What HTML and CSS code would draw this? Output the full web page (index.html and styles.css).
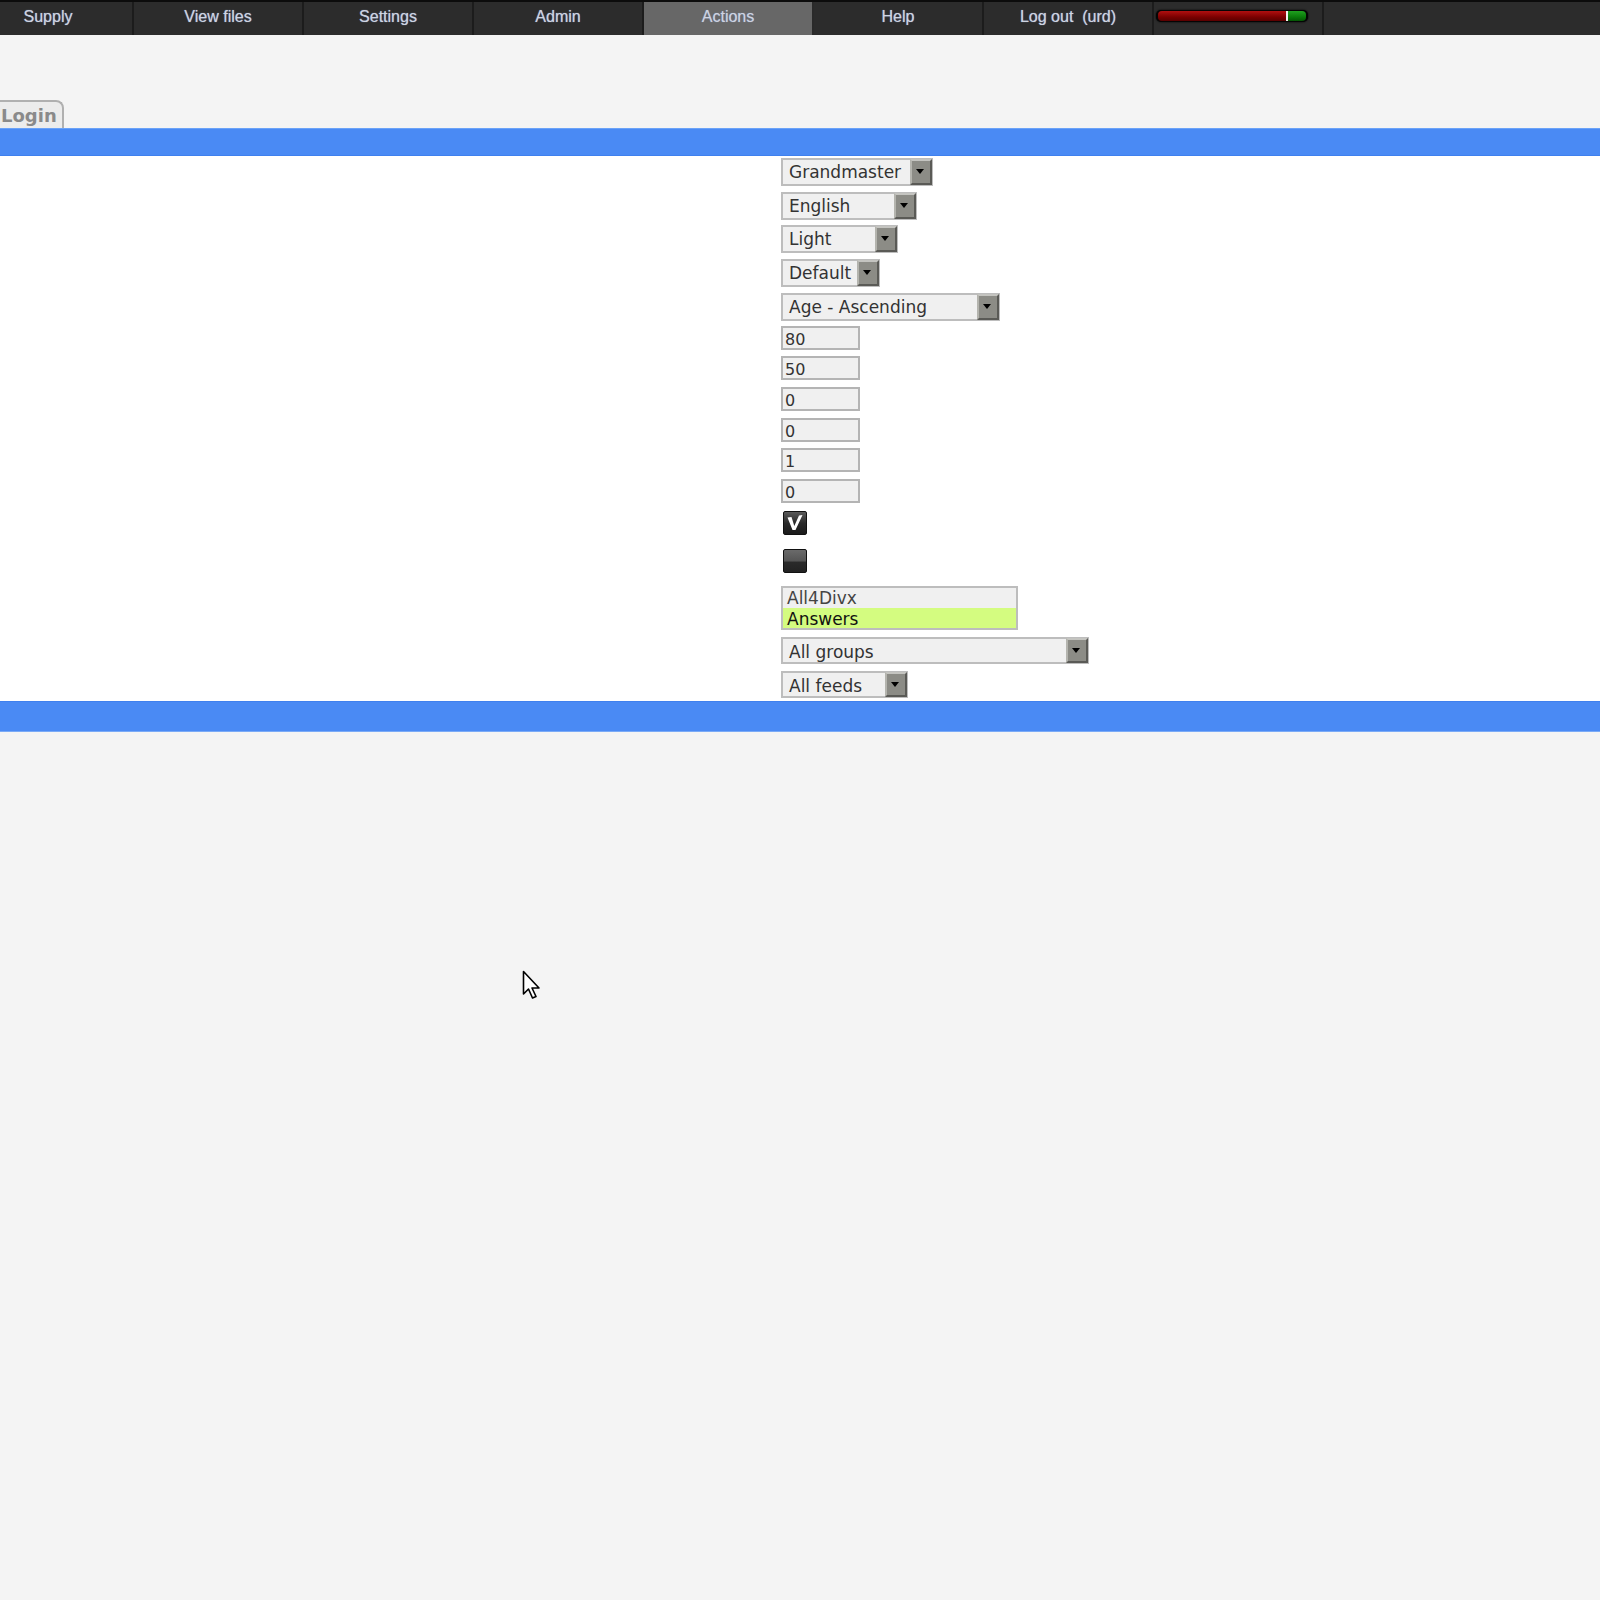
FILE: index.html
```html
<!DOCTYPE html>
<html>
<head>
<meta charset="utf-8">
<title>Settings</title>
<link rel="stylesheet" href="styles.css">
</head>
<body>
<nav class="topbar">
  <a class="tab tab-first">Supply</a>
  <a class="tab">View files</a>
  <a class="tab">Settings</a>
  <a class="tab">Admin</a>
  <a class="tab tab-active">Actions</a>
  <a class="tab">Help</a>
  <a class="tab">Log out&nbsp; (urd)</a>
  <div class="tab tab-meter"><div class="meter"><div class="meter-red"></div><div class="meter-mark"></div><div class="meter-green"></div></div></div>
</nav>
<div class="spacer"></div>
<div class="login-tab">Login</div>
<div class="bluebar"></div>
<main class="form">
  <div class="sel w-grand"><span class="sel-text">Grandmaster</span><span class="arrow"></span></div>
  <div class="sel w-eng"><span class="sel-text">English</span><span class="arrow"></span></div>
  <div class="sel w-light"><span class="sel-text">Light</span><span class="arrow"></span></div>
  <div class="sel w-def"><span class="sel-text">Default</span><span class="arrow"></span></div>
  <div class="sel w-age sel-last"><span class="sel-text">Age - Ascending</span><span class="arrow"></span></div>
  <div class="inp">80</div>
  <div class="inp">50</div>
  <div class="inp">0</div>
  <div class="inp">0</div>
  <div class="inp">1</div>
  <div class="inp inp-last">0</div>
  <div class="chk chk-on"><svg width="24" height="24" viewBox="0 0 24 24"><path d="M4.5 6.5 L9.5 19 L12.5 19 L19.5 4 L16 4.5 L11.3 15 L8.5 6 Z" fill="#fff"/></svg></div>
  <div class="chk chk-off"></div>
  <div class="listbox">
    <div class="opt">All4Divx</div>
    <div class="opt opt-sel">Answers</div>
  </div>
  <div class="sel w-groups sel-small"><span class="sel-text">All groups</span><span class="arrow"></span></div>
  <div class="sel w-feeds sel-small sel-end"><span class="sel-text">All feeds</span><span class="arrow"></span></div>
</main>
<div class="bluebar bluebar-bottom"></div>
<div class="cursor"><svg width="22" height="32" viewBox="0 0 22 32"><path d="M1.5 1.5 L1.5 24 L6.5 19 L10.5 28 L14 26.5 L10 18 L17 18 Z" fill="#fff" stroke="#000" stroke-width="1.6" stroke-linejoin="round"/></svg></div>
</body>
</html>
```
FILE: styles.css
```css
html, body {
  margin: 0;
  padding: 0;
}
body {
  background: #f4f4f4;
  width: 1600px;
  min-height: 1600px;
  position: relative;
  overflow: hidden;
  font-family: "DejaVu Sans", sans-serif;
}
.topbar {
  display: flex;
  height: 33px;
  background: #2c2c2c;
  border-top: 2px solid #0c0c0c;
  overflow: hidden;
}
.tab {
  flex: 0 0 170px;
  border-right: 2px solid #1c1c1c;
  display: flex;
  align-items: center;
  justify-content: center;
  font-family: "Liberation Sans", Arial, sans-serif;
  font-size: 16px;
  color: #cfd4e0;
  text-shadow: 0 0 1px #8aa0c8;
  padding-bottom: 4px;
  box-sizing: border-box;
  height: 33px;
}
.tab-first {
  margin-left: -36px;
}
.tab-active {
  background: #676767;
  border-right-color: #2a2a2a;
}
.tab-meter {
  justify-content: flex-start;
  align-items: flex-start;
  padding: 8px 0 0 2px;
}
.meter {
  display: flex;
  width: 152px;
  height: 12px;
  background: #050505;
  border-radius: 5px;
  padding: 1px 2px;
  box-sizing: border-box;
  box-shadow: 0 0 2px #000;
}
.meter-red {
  flex: 0 0 128px;
  background: linear-gradient(#b01010, #7a0000 60%, #5a0000);
  border-radius: 4px 0 0 4px;
}
.meter-mark {
  flex: 0 0 2px;
  background: #f0f0f0;
}
.meter-green {
  flex: 1;
  background: linear-gradient(#20a020, #0a7a0a 60%, #055505);
  border-radius: 0 4px 4px 0;
}
.spacer {
  height: 65px;
}
.login-tab {
  width: 61px;
  height: 26px;
  border: 2px solid #b0b0b0;
  border-left: none;
  border-bottom: none;
  border-radius: 0 8px 0 0;
  background: #ececec;
  color: #8a8a8a;
  font-weight: bold;
  font-size: 18px;
  line-height: 28px;
  padding-left: 1px;
  box-sizing: content-box;
}
.bluebar {
  height: 26px;
  background: #4a8af4;
  border-top: 1px solid #6aa2f8;
  border-bottom: 1px solid #3f80ee;
}
.bluebar-bottom {
  height: 29px;
  border-top: 1px solid #3f80ee;
  border-bottom: 1px solid #7aaaf6;
}
.form {
  background: #fff;
  display: flex;
  flex-direction: column;
  align-items: flex-start;
  padding: 2px 0 3px 781px;
}
.sel {
  height: 28px;
  box-sizing: border-box;
  border: 2px solid #bdbdbd;
  background: #f0f0f0;
  display: flex;
  align-items: center;
  justify-content: space-between;
  margin-bottom: 5.7px;
  font-size: 17px;
  color: #333;
}
.sel-text {
  padding-left: 6px;
  white-space: nowrap;
}
.arrow {
  width: 22px;
  height: 26px;
  box-sizing: border-box;
  align-self: flex-start;
  margin-top: -1px;
  margin-right: -1px;
  background: #8c8c86;
  border-top: 2px solid #c4c4c0;
  border-left: 2px solid #b4b4ae;
  border-right: 2px solid #5a5a56;
  border-bottom: 2px solid #5a5a56;
  position: relative;
}
.arrow::after {
  content: "";
  position: absolute;
  left: 4px;
  top: 8px;
  border-left: 4px solid transparent;
  border-right: 4px solid transparent;
  border-top: 5px solid #000;
}
.w-grand { width: 152px; }
.w-eng { width: 136px; }
.w-light { width: 117px; }
.w-def { width: 99px; }
.w-age { width: 219px; }
.w-groups { width: 308px; }
.w-feeds { width: 127px; }
.sel-last { margin-bottom: 5px; }
.sel-small { height: 27px; margin-bottom: 7px; }
.sel-small .arrow { height: 25px; }
.sel-small .sel-text { padding-top: 2px; }
.sel-end { margin-bottom: 0; }
.inp {
  width: 79px;
  height: 24px;
  box-sizing: border-box;
  border: 2px solid #b4b4b4;
  background: #f0f0f0;
  font-size: 16px;
  color: #333;
  padding: 2px 0 0 2px;
  line-height: 20px;
  margin-bottom: 6.6px;
}
.inp-last { margin-bottom: 8.4px; }
.chk {
  width: 24px;
  height: 24px;
  box-sizing: border-box;
  border: 1px solid #111;
  border-radius: 2px;
  margin-left: 2px;
}
.chk-on {
  background: linear-gradient(#5a5a5a, #2a2a2a 50%, #1a1a1a);
  margin-bottom: 14px;
}
.chk-on svg { display: block; margin: -1px; }
.chk-off {
  background: linear-gradient(#6a6a6a, #555 50%, #2a2a2a 55%, #222);
  margin-bottom: 13px;
}
.listbox {
  width: 237px;
  height: 44px;
  box-sizing: border-box;
  border: 2px solid #bdbdbd;
  background: #f0f0f0;
  margin-bottom: 7px;
  font-size: 17px;
  color: #444;
}
.opt {
  height: 20px;
  line-height: 20px;
  padding-left: 4px;
}
.opt-sel {
  background: #d4fc80;
  color: #111;
  line-height: 22px;
}
.cursor {
  position: absolute;
  left: 522px;
  top: 970px;
  width: 22px;
  height: 32px;
}
.cursor svg { display: block; }
```
